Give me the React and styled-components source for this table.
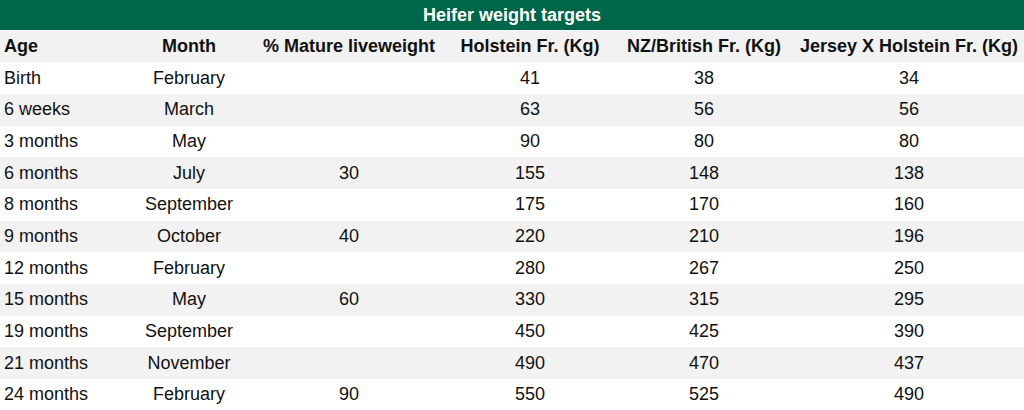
import React from "react";
import styled, { createGlobalStyle } from "styled-components";

const GlobalStyle = createGlobalStyle`
  html, body {
    margin: 0;
    padding: 0;
    background: #ffffff;
  }
  body {
    font-family: "Liberation Sans", Arial, sans-serif;
    color: #111111;
  }
`;

const columns = [
  { key: "age", label: "Age", width: 126, align: "left" },
  { key: "month", label: "Month", width: 126, align: "center" },
  { key: "mature", label: "% Mature liveweight", width: 194, align: "center" },
  { key: "holstein", label: "Holstein Fr. (Kg)", width: 168, align: "center" },
  { key: "nz", label: "NZ/British Fr. (Kg)", width: 180, align: "center" },
  { key: "jersey", label: "Jersey X Holstein Fr. (Kg)", width: 230, align: "center" },
];

const rows = [
  ["Birth", "February", "", "41", "38", "34"],
  ["6 weeks", "March", "", "63", "56", "56"],
  ["3 months", "May", "", "90", "80", "80"],
  ["6 months", "July", "30", "155", "148", "138"],
  ["8 months", "September", "", "175", "170", "160"],
  ["9 months", "October", "40", "220", "210", "196"],
  ["12 months", "February", "", "280", "267", "250"],
  ["15 months", "May", "60", "330", "315", "295"],
  ["19 months", "September", "", "450", "425", "390"],
  ["21 months", "November", "", "490", "470", "437"],
  ["24 months", "February", "90", "550", "525", "490"],
];

const HeiferTable = () => {
  return (
    <Table>
      <colgroup>
        {columns.map((col) => (
          <col key={col.key} style={{ width: col.width }} />
        ))}
      </colgroup>
      <thead>
        <tr>
          <Title colSpan={columns.length}>Heifer weight targets</Title>
        </tr>
        <Row $shaded>
          {columns.map((col) => (
            <HeadCell key={col.key} $align={col.align}>
              {col.label}
            </HeadCell>
          ))}
        </Row>
      </thead>
      <tbody>
        {rows.map((row, i) => (
          <Row key={row[0]} $shaded={i % 2 === 1}>
            {row.map((value, j) => (
              <Cell key={columns[j].key} $align={columns[j].align}>
                {value}
              </Cell>
            ))}
          </Row>
        ))}
      </tbody>
    </Table>
  );
};

export default function App() {
  return (
    <>
      <GlobalStyle />
      <HeiferTable />
    </>
  );
}

const Table = styled.table`
  width: 1024px;
  border-collapse: collapse;
  table-layout: fixed;
  font-size: 18px;
`;

const Title = styled.th`
  height: 30px;
  padding: 0;
  background: #00664a;
  color: #ffffff;
  font-size: 18px;
  font-weight: 700;
  text-align: center;
  border-bottom: 1px solid #ffffff;
`;

const Row = styled.tr`
  height: 31.7px;
  background: ${({ $shaded }) => ($shaded ? "#f2f2f2" : "#ffffff")};
`;

const HeadCell = styled.th`
  padding: 0 4px;
  font-weight: 700;
  white-space: nowrap;
  text-align: ${({ $align }) => $align};
`;

const Cell = styled.td`
  padding: 0 4px;
  white-space: nowrap;
  text-align: ${({ $align }) => $align};
`;
